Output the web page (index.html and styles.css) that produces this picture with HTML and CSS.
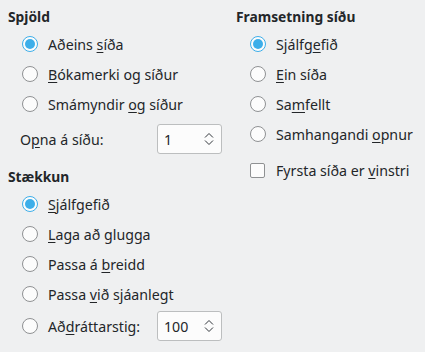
FILE: index.html
```html
<!DOCTYPE html>
<html lang="is">
<head>
    <meta charset="UTF-8">
    <title>Skjástillingar</title>
    <link rel="stylesheet" href="styles.css">
</head>
<body>
    <div class="page">
        <div class="col col-left">
            <div class="group-title">Spjöld</div>
            <div class="option">
                <span class="radio checked"></span>
                <span class="label">Aðeins <u>s</u>íða</span>
            </div>
            <div class="option">
                <span class="radio"></span>
                <span class="label"><u>B</u>ókamerki og síður</span>
            </div>
            <div class="option">
                <span class="radio"></span>
                <span class="label">Smámyndir <u>o</u>g síður</span>
            </div>
            <div class="field-row open-row">
                <span class="field-label">O<u>p</u>na á síðu:</span>
                <div class="spinbox">
                    <span class="spin-value">1</span>
                    <svg class="spin-arrows" width="10" height="16" viewBox="0 0 10 16">
                        <path d="M1 6.5 L5 2.5 L9 6.5" fill="none" stroke="#31363b" stroke-width="1"/>
                        <path d="M1 9.5 L5 13.5 L9 9.5" fill="none" stroke="#31363b" stroke-width="1"/>
                    </svg>
                </div>
            </div>

            <div class="group-title second">Stækkun</div>
            <div class="option">
                <span class="radio checked"></span>
                <span class="label"><u>S</u>jálfgefið</span>
            </div>
            <div class="option">
                <span class="radio"></span>
                <span class="label"><u>L</u>aga að glugga</span>
            </div>
            <div class="option">
                <span class="radio"></span>
                <span class="label">Passa á <u>b</u>reidd</span>
            </div>
            <div class="option">
                <span class="radio"></span>
                <span class="label">Passa <u>v</u>ið sjáanlegt</span>
            </div>
            <div class="option zoom-row">
                <span class="radio"></span>
                <span class="label zoom-label">Að<u>d</u>ráttarstig:</span>
                <div class="spinbox">
                    <span class="spin-value">100</span>
                    <svg class="spin-arrows" width="10" height="16" viewBox="0 0 10 16">
                        <path d="M1 6.5 L5 2.5 L9 6.5" fill="none" stroke="#31363b" stroke-width="1"/>
                        <path d="M1 9.5 L5 13.5 L9 9.5" fill="none" stroke="#31363b" stroke-width="1"/>
                    </svg>
                </div>
            </div>
        </div>

        <div class="col col-right">
            <div class="group-title">Framsetning síðu</div>
            <div class="option">
                <span class="radio checked"></span>
                <span class="label">Sjálfg<u>e</u>fið</span>
            </div>
            <div class="option">
                <span class="radio"></span>
                <span class="label"><u>E</u>in síða</span>
            </div>
            <div class="option">
                <span class="radio"></span>
                <span class="label">Sa<u>m</u>fellt</span>
            </div>
            <div class="option">
                <span class="radio"></span>
                <span class="label">Samhangandi <u>o</u>pnur</span>
            </div>
            <div class="option check-row">
                <span class="checkbox"></span>
                <span class="label">Fyrsta síða er <u>v</u>instri</span>
            </div>
        </div>
    </div>
</body>
</html>
```

FILE: styles.css
```css
body {
    margin: 0;
    background: #eff0f1;
    color: #232629;
    font-family: 'Noto Sans', sans-serif;
    font-size: 14.2px;
}

u {
    text-decoration: underline;
    text-decoration-thickness: 1px;
    text-underline-offset: 2px;
}

.page {
    display: flex;
    padding-top: 7px;
}

.col {
    display: flex;
    flex-direction: column;
}

.col-left {
    width: 227px;
    padding-left: 8px;
}

.col-right {
    padding-left: 1px;
}

.group-title {
    font-weight: bold;
    font-size: 13.8px;
    line-height: 20px;
    height: 20px;
    margin-bottom: 2px;
}

.group-title.second {
    margin-top: 13px;
}

.option {
    display: flex;
    align-items: center;
    height: 30px;
    padding-left: 14px;
}

.radio {
    box-sizing: border-box;
    width: 16px;
    height: 16px;
    border-radius: 50%;
    border: 1px solid #8f9193;
    background: #fcfcfc;
    margin-right: 10px;
    flex-shrink: 0;
    position: relative;
}

.radio.checked {
    border-color: #3daee9;
    background: #fcfcfc;
}

.radio.checked::after {
    content: "";
    position: absolute;
    left: 2px;
    top: 2px;
    width: 10px;
    height: 10px;
    border-radius: 50%;
    background: #3daee9;
}

.checkbox {
    box-sizing: border-box;
    width: 15px;
    height: 15px;
    border-radius: 2px;
    border: 1px solid #8f9193;
    background: #fcfcfc;
    margin-right: 11px;
    flex-shrink: 0;
}

.check-row {
    margin-top: 6px;
}

.field-row {
    display: flex;
    align-items: center;
    height: 30px;
    margin-top: 5px;
    padding-left: 12px;
}

.field-label {
    width: 137px;
}

.zoom-row {
    margin-top: 2px;
}

.zoom-label {
    width: 109px;
}

.spinbox {
    box-sizing: border-box;
    width: 65px;
    height: 30px;
    border: 1px solid #bcbebf;
    border-radius: 3px;
    background: #fcfcfc;
    display: flex;
    align-items: center;
    justify-content: space-between;
    padding: 0 7px 0 6px;
}

.spin-arrows {
    display: block;
}
```
